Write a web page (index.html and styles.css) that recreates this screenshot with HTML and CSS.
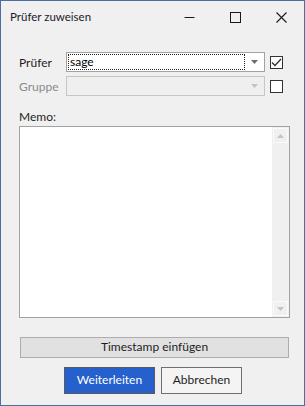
FILE: index.html
```html
<!DOCTYPE html>
<html>
<head>
<meta charset="utf-8">
<link rel="stylesheet" href="styles.css">
</head>
<body>
<div class="window">
  <div class="titlebar">
    <span class="title">Prüfer zuweisen</span>
    <div class="controls">
      <span class="ctl"><svg width="11" height="11" viewBox="0 0 11 11"><path d="M0.5 5.5H10.5" stroke="#1a1a1a" stroke-width="1"/></svg></span>
      <span class="ctl"><svg width="11" height="11" viewBox="0 0 11 11"><rect x="0.5" y="0.5" width="10" height="10" fill="none" stroke="#1a1a1a" stroke-width="1"/></svg></span>
      <span class="ctl"><svg width="11" height="11" viewBox="0 0 11 11"><path d="M0.5 0.5L10.5 10.5M10.5 0.5L0.5 10.5" stroke="#1a1a1a" stroke-width="1.1"/></svg></span>
    </div>
  </div>
  <div class="content">
    <div class="row">
      <span class="label">Prüfer</span>
      <div class="combo">
        <span class="focus">sage</span>
        <svg class="arrow" width="7" height="4" viewBox="0 0 7 4"><path d="M0 0H7L3.5 4Z" fill="#6d6d6d"/></svg>
      </div>
      <span class="check"><svg width="11" height="11" viewBox="0 0 11 11"><path d="M1 5.5L4 8.5L10 2" fill="none" stroke="#333" stroke-width="1.3"/></svg></span>
    </div>
    <div class="row row2">
      <span class="label disabled">Gruppe</span>
      <div class="combo combo-disabled">
        <span class="focus blank"></span>
        <svg class="arrow" width="7" height="4" viewBox="0 0 7 4"><path d="M0 0H7L3.5 4Z" fill="#c4c4c4"/></svg>
      </div>
      <span class="check"></span>
    </div>
    <div class="memo-label">Memo:</div>
    <div class="memo">
      <div class="memo-text"></div>
      <div class="scrollbar">
        <span class="sbtn"><svg width="7" height="4" viewBox="0 0 7 4"><path d="M0 4H7L3.5 0Z" fill="#c4c4c4"/></svg></span>
        <span class="sbtn"><svg width="7" height="4" viewBox="0 0 7 4"><path d="M0 0H7L3.5 4Z" fill="#c4c4c4"/></svg></span>
      </div>
    </div>
    <div class="timestamp">Timestamp einfügen</div>
    <div class="buttons">
      <div class="btn primary">Weiterleiten</div>
      <div class="btn">Abbrechen</div>
    </div>
  </div>
</div>
</body>
</html>
```
FILE: styles.css
```css
* { box-sizing: border-box; }
html, body { margin: 0; padding: 0; }
body {
  width: 305px;
  height: 406px;
  font-family: Lato, "Noto Sans", sans-serif;
  font-size: 12px;
  color: #1e1e1e;
}
.window {
  width: 305px;
  height: 406px;
  border: 1px solid #4c6fa3;
  background: #f0f0f0;
  display: flex;
  flex-direction: column;
}
.titlebar {
  height: 29px;
  display: flex;
  align-items: center;
  justify-content: space-between;
  padding-left: 9px;
}
.title {
  font-size: 11.5px;
  color: #1a1a2e;
  margin-top: 1px;
}
.controls {
  display: flex;
  height: 100%;
}
.ctl {
  width: 46px;
  display: flex;
  align-items: center;
  justify-content: center;
  padding-top: 3px;
}
.content {
  padding: 22px 15px 0 18px;
  display: flex;
  flex-direction: column;
}
.row {
  display: flex;
  align-items: center;
  height: 20px;
}
.row2 { margin-top: 4px; }
.label {
  width: 47px;
  font-size: 12px;
  color: #1e1e1e;
}
.label.disabled { color: #8a8a8a; }
.combo {
  width: 199px;
  height: 20px;
  border: 1px solid #a2a2a2;
  background: #fff;
  display: flex;
  align-items: center;
  padding: 1px;
}
.combo-disabled {
  border-color: #c6c6c6;
  background: #efefef;
}
.focus {
  flex: 1;
  height: 16px;
  border: 1px dotted #222;
  font-size: 12px;
  line-height: 13px;
  padding-left: 1px;
  color: #000;
}
.focus.blank { border: none; }
.arrow {
  margin: 0 5px 0 6px;
}
.check {
  width: 13px;
  height: 13px;
  border: 1px solid #333;
  background: #fff;
  margin-left: 5px;
  display: flex;
  align-items: center;
  justify-content: center;
}
.memo-label {
  margin-top: 14px;
  font-size: 12px;
  height: 14px;
  line-height: 14px;
}
.memo {
  margin-top: 2px;
  height: 192px;
  width: 271px;
  border: 1px solid #a2a2a2;
  background: #fff;
  display: flex;
}
.memo-text { flex: 1; }
.scrollbar {
  width: 17px;
  background: #f0f0f0;
  display: flex;
  flex-direction: column;
  justify-content: space-between;
  padding: 1px;
}
.sbtn {
  height: 15px;
  border: 1px solid #fafafa;
  display: flex;
  align-items: center;
  justify-content: center;
}
.timestamp {
  margin-top: 19px;
  margin-left: 1px;
  width: 269px;
  height: 21px;
  border: 1px solid #adadad;
  background: #e1e1e1;
  text-align: center;
  font-size: 12px;
  line-height: 18px;
}
.buttons {
  margin-top: 9px;
  display: flex;
  justify-content: center;
  gap: 6px;
  padding-right: 2px;
}
.btn {
  width: 81px;
  height: 27px;
  border: 1px solid #6f6f6f;
  background: #f4f4f4;
  font-size: 12px;
  text-align: center;
  line-height: 24px;
}
.btn.primary {
  width: 91px;
  background: #2660cc;
  color: #fff;
  border-color: #5a5a5a;
}
```
